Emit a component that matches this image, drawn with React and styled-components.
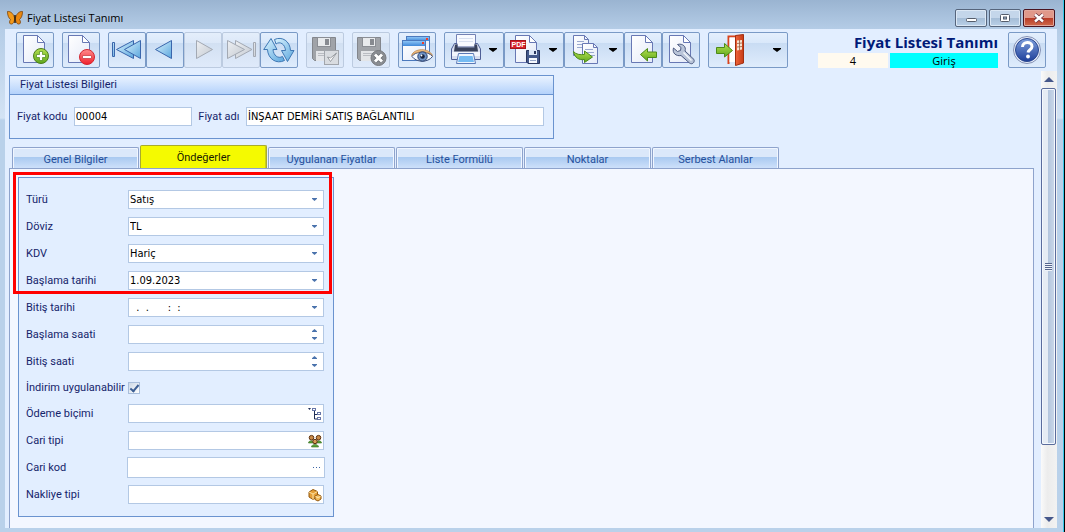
import React from 'react'
import styled, { createGlobalStyle, css } from "styled-components";

const GlobalStyle = createGlobalStyle`
  * {
    box-sizing: border-box;
  }
  body {
    margin: 0;
    background: #b9d1ea;
    font-family: Roboto, "Open Sans", sans-serif;
    font-size: 11px;
    color: #15246b;
  }
  button, input, select {
    font: inherit;
    color: inherit;
  }
`;

/* ---------- icons ---------- */

const Defs = () => (
  <HiddenSvg aria-hidden="true">
    <defs>
      <linearGradient id="blue" x1="0" y1="0" x2="1" y2="1">
        <stop offset="0" stopColor="#dcf4ff" />
        <stop offset="1" stopColor="#5aa6dd" />
      </linearGradient>
      <linearGradient id="gray" x1="0" y1="0" x2="1" y2="1">
        <stop offset="0" stopColor="#eef0f3" />
        <stop offset="1" stopColor="#c3c9d1" />
      </linearGradient>
      <linearGradient id="page" x1="0" y1="0" x2="1" y2="1">
        <stop offset="0" stopColor="#ffffff" />
        <stop offset="1" stopColor="#e4eaf8" />
      </linearGradient>
      <linearGradient id="green" x1="0" y1="0" x2="0" y2="1">
        <stop offset="0" stopColor="#b4e04f" />
        <stop offset="1" stopColor="#5fa81c" />
      </linearGradient>
      <linearGradient id="red" x1="0" y1="0" x2="0" y2="1">
        <stop offset="0" stopColor="#ff8d8d" />
        <stop offset="1" stopColor="#f0202c" />
      </linearGradient>
      <linearGradient id="win" x1="0" y1="0" x2="0" y2="1">
        <stop offset="0" stopColor="#8cc4f6" />
        <stop offset="1" stopColor="#3f87d8" />
      </linearGradient>
      <linearGradient id="help" x1="0" y1="0" x2="0" y2="1">
        <stop offset="0" stopColor="#7f9fdc" />
        <stop offset="1" stopColor="#1e3f9a" />
      </linearGradient>
      <linearGradient id="door" x1="0" y1="0" x2="1" y2="0">
        <stop offset="0" stopColor="#f0643a" />
        <stop offset="1" stopColor="#c63c17" />
      </linearGradient>
    </defs>
  </HiddenSvg>
);

const Icon = ({ children }) => (
  <svg width="32" height="32" viewBox="0 0 32 32" aria-hidden="true">{children}</svg>
);

const Page = ({ x = 0 }) => (
  <g transform={`translate(${x} 0)`}>
    <path d="M4.500 1.500H18.500L25.500 8.500V28.500H4.500Z" fill="url(#page)" stroke="#6878b4" />
    <path d="M18.500 1.500V8.500H25.500Z" fill="#fff" stroke="#6878b4" strokeLinejoin="round" />
  </g>
);

const NewIcon = () => (
  <Icon>
    <Page />
    <circle cx="22" cy="22" r="7.500" fill="url(#green)" stroke="#4c7d1c" />
    <path d="M20.500 17.500h3v3h3v3h-3v3h-3v-3h-3v-3h3z" fill="#fff" stroke="#4c8a18" strokeWidth="0.700" />
  </Icon>
);

const DeleteIcon = () => (
  <Icon>
    <Page x={-1} />
    <circle cx="22" cy="23" r="7.500" fill="url(#red)" stroke="#d42630" />
    <rect x="17.500" y="21.500" width="9" height="3" rx="0.500" fill="#fff" stroke="#b81c24" strokeWidth="0.600" />
  </Icon>
);

const FirstIcon = () => (
  <Icon>
    <g fill="url(#blue)" stroke="#3a66ac" strokeLinejoin="round">
      <rect x="1.500" y="8.500" width="2" height="14" />
      <path d="M22.500 6.500V24.500L5.500 15.500Z" />
      <path d="M29.500 6.500V24.500L13.500 15.500Z" />
    </g>
  </Icon>
);

const PrevIcon = () => (
  <Icon>
    <path d="M22.500 6.500V24.500L6.500 15.500Z" fill="url(#blue)" stroke="#3a66ac" strokeLinejoin="round" />
  </Icon>
);

const NextIcon = () => (
  <Icon>
    <path d="M9.500 6.500V24.500L25.500 15.500Z" fill="url(#gray)" stroke="#a3a9b3" strokeLinejoin="round" />
  </Icon>
);

const LastIcon = () => (
  <Icon>
    <g fill="url(#gray)" stroke="#a3a9b3" strokeLinejoin="round">
      <path d="M10.500 6.500V24.500L27 15.500Z" />
      <path d="M2.500 6.500V24.500L19.500 15.500Z" />
      <rect x="28.500" y="8.500" width="2" height="14" />
    </g>
  </Icon>
);

const RefreshIcon = () => (
  <Icon>
    <g fill="url(#blue)" stroke="#3f78b4" strokeLinejoin="round">
      <path d="M11.500 5.500C19 2 27 7 27.500 16.500H31L24.500 27.500L18.500 16.500H22.500C22 10 17 7 13 10Z" />
      <path d="M8 4.500L14 15.500H10C10.500 21.500 15 25 19.500 22.500L21.500 26.500C13.500 30.500 5 25 4.500 15.500H0.700Z" />
    </g>
  </Icon>
);

const GrayFloppy = ({ x = 0 }) => (
  <g transform={`translate(${x} 0)`}>
    <path d="M3.500 3.500H26.500V26.500H5.500L3.500 24.500Z" fill="#a0a3a8" stroke="#83868c" />
    <rect x="8" y="3" width="14" height="10" fill="#8b8e94" />
    <rect x="9" y="4" width="12" height="8" fill="#e8eaec" />
    <rect x="16" y="5" width="4" height="6" fill="#878a90" />
    <rect x="7" y="17" width="16" height="10" fill="#e3e5e8" />
    <path d="M9 19.500h12M9 21.500h12" stroke="#b9bcc2" />
  </g>
);

const SaveIcon = () => (
  <Icon>
    <GrayFloppy />
    <rect x="15.500" y="16.500" width="14" height="14" fill="#d9dce0" stroke="#a1a5ab" />
    <path d="M18.500 23l3 4.500l6-8.500l-6 5z" fill="#fff" stroke="#85898f" strokeWidth="0.800" />
  </Icon>
);

const SaveCancelIcon = () => (
  <Icon>
    <GrayFloppy x={-1} />
    <circle cx="23.500" cy="24" r="7.500" fill="#8a8d92" stroke="#76797e" />
    <path d="M20 20.500l7 7M27 20.500l-7 7" stroke="#6a6d72" strokeWidth="4.500" />
    <path d="M20 20.500l7 7M27 20.500l-7 7" stroke="#fff" strokeWidth="3" />
  </Icon>
);

const ViewIcon = () => (
  <Icon>
    <rect x="5.500" y="2.500" width="23" height="18" fill="#eef4fd" stroke="#4b79bd" />
    <rect x="6" y="3" width="22" height="4" fill="url(#win)" />
    <rect x="25" y="4" width="2" height="2" fill="#f03c28" />
    <rect x="1.500" y="6.500" width="23" height="20" fill="url(#page)" stroke="#4b79bd" />
    <rect x="2" y="7" width="22" height="5" fill="url(#win)" />
    <rect x="21" y="8" width="2" height="2" fill="#f03c28" />
    <path d="M11 22.500C14 17 27 16.500 31.500 22.500C27 29 15 28.500 11 22.500Z" fill="#f7fbff" stroke="#3a4f7e" />
    <path d="M10.500 21.500C13 14 28 13.500 31.500 21.500C27 16.500 15.500 16.500 10.500 21.500Z" fill="#f3c48a" stroke="#b57b3c" strokeWidth="0.700" />
    <circle cx="21.500" cy="22.500" r="4.700" fill="#6f93c6" stroke="#2b426f" />
    <circle cx="21.500" cy="22.500" r="2.300" fill="#17233f" />
    <circle cx="20.500" cy="21.500" r="0.900" fill="#fff" />
  </Icon>
);

const PrintIcon = () => (
  <Icon>
    <path d="M6.500 0.500H25.500V14H6.500Z" fill="#f8faff" stroke="#7482b4" />
    <path d="M9 4.500h14M9 7.500h14" stroke="#d8e0f0" />
    <path d="M4.500 9.500H7V13H25V9.500H27.500L30.500 15V25.500H1.500V15Z" fill="#d8dff0" stroke="#4f5f96" />
    <path d="M5 10.500H7.500V13.500H24.500V10.500H27L28 17.500H4Z" fill="#39425c" />
    <rect x="2" y="18" width="28" height="4" fill="#f3f6fd" />
    <path d="M8.500 19.500H23.500L25.500 29.500H6.500Z" fill="#eff6ff" stroke="#5b79b6" />
    <path d="M9.500 22H22.500L24 28H8Z" fill="#75bbf2" />
  </Icon>
);

const PdfIcon = () => (
  <Icon>
    <Page x={1} />
    <rect x="0.500" y="6.500" width="15" height="8" fill="#d8232b" stroke="#a3151c" />
    <text x="1.500" y="13" fontSize="7" fontWeight="bold" fontFamily="Liberation Sans, sans-serif" fill="#fff">PDF</text>
    <path d="M16.500 16.500H29.500V29.500H18L16.500 28Z" fill="#43588a" stroke="#28365f" />
    <rect x="19" y="16" width="8" height="5" fill="#dbe6f7" />
    <rect x="24" y="17" width="2" height="3" fill="#28365f" />
    <rect x="19" y="24" width="8" height="5" fill="#f6f9fe" />
    <path d="M20 26.500h6" stroke="#93a4c8" />
  </Icon>
);

const ExportIcon = () => (
  <Icon>
    <path d="M3.500 1.500H14.500L18.500 5.500V21.500H3.500Z" fill="url(#page)" stroke="#6878b4" />
    <path d="M14.500 1.500V5.500H18.500" fill="none" stroke="#6878b4" />
    <path d="M7 7.500h7M7 10.500h8M7 13.500h8" stroke="#9aa9cf" />
    <path d="M12.500 9.500H23.500L27.500 13.500V29.500H12.500Z" fill="url(#page)" stroke="#6878b4" />
    <path d="M23.500 9.500V13.500H27.500" fill="none" stroke="#6878b4" />
    <path d="M15 15.500h8M15 18.500h9M20 21.500h5" stroke="#9aa9cf" />
    <path d="M3.500 17.500C6 20.500 10 21 14.500 20.500V17L22.500 23L14.500 28.500V25.500C9 26.500 4.500 23.500 3.500 17.500Z" fill="url(#green)" stroke="#4c8a18" />
  </Icon>
);

const ImportIcon = () => (
  <Icon>
    <Page />
    <path d="M13.500 20.500L20.500 14.500V18H29.500V23.500H20.500V27Z" fill="url(#green)" stroke="#4c8a18" strokeLinejoin="round" />
  </Icon>
);

const WrenchIcon = () => (
  <Icon>
    <Page />
    <path d="M8.500 14L12.500 17.500L15.500 16.500L16 13.500L12.500 10.500C18 9 21.500 13 20 17L29 25.500C30 28.500 27 31 24.500 29L16 21.500C11 22.500 7 19 8.500 14Z" fill="#b9c4d8" stroke="#4c5a80" strokeLinejoin="round" />
    <path d="M18.500 18.500L26.500 26.500" stroke="#f4f7fc" strokeWidth="1.500" />
  </Icon>
);

const DoorIcon = () => (
  <Icon>
    <path d="M14.500 30V2.500H25" fill="none" stroke="#d9441c" strokeWidth="2" />
    <path d="M15.500 3.500H22V28H15.500Z" fill="#fff" />
    <path d="M21.500 1.500L29.500 0.500V29L21.500 31.500Z" fill="url(#door)" stroke="#a32f10" />
    <path d="M23 6.500L28 6V15.500L23 16.500Z" fill="#f7e3cf" />
    <path d="M25.500 6v10M23 9.500l5-0.500M23 13l5-0.500" stroke="#9b5a3c" strokeWidth="0.800" />
    <path d="M2.500 13.500H10.500V9.500L18.500 16.500L10.500 23V19.500H2.500Z" fill="url(#green)" stroke="#4c8a18" strokeLinejoin="round" />
  </Icon>
);

const HelpIcon = () => (
  <Icon>
    <circle cx="16" cy="16" r="13.500" fill="#e8eefb" stroke="#8491b4" />
    <circle cx="16" cy="16" r="11.500" fill="url(#help)" stroke="#2a478f" />
    <path d="M11.500 13C11.500 7 21 7 21 12.500C21 16 17.500 15.500 17 18.500" fill="none" stroke="#fff" strokeWidth="3" />
    <circle cx="17" cy="22.500" r="1.900" fill="#fff" />
  </Icon>
);

const Butterfly = () => (
  <svg width="16" height="16" viewBox="0 0 16 16" aria-hidden="true">
    <path d="M0.500 1.500C4 1 7 4.500 7.700 8.500C7.500 12 6 14.500 3.500 14C2 13 2.500 11 3.500 9.500C1.500 8 0.500 5 0.500 1.500Z" fill="#f39a1b" stroke="#7d4208" strokeWidth="0.800" />
    <path d="M15.500 1.500C12 1 9 4.500 8.300 8.500C8.500 12 10 14.500 12.500 14C14 13 13.500 11 12.500 9.500C14.500 8 15.500 5 15.500 1.500Z" fill="#e98712" stroke="#7d4208" strokeWidth="0.800" />
    <path d="M8 5v8" stroke="#33200a" strokeWidth="1.500" />
  </svg>
);

const Caret = ({ up, dark }) => (
  <svg width={dark ? 8 : 5} height={dark ? 4 : 3} viewBox="0 0 8 4" preserveAspectRatio="none" aria-hidden="true">
    <path d={up ? "M0 4H8V3L4 0L0 3Z" : "M0 0H8V1L4 4L0 1Z"} fill={dark ? "#000" : "#4a72ac"} />
  </svg>
);

const TreeIcon = () => (
  <svg width="14" height="14" viewBox="0 0 14 14" aria-hidden="true">
    <path d="M0 1h3l-1.500 2z" fill="#1d2c55" />
    <path d="M6.500 4v8H9M6.500 7.500H9" fill="none" stroke="#1d2c55" />
    <rect x="4.500" y="1.500" width="3" height="2" fill="#fff" stroke="#6675a8" />
    <rect x="9.500" y="5.500" width="3" height="2" fill="#fff" stroke="#6675a8" />
    <rect x="9.500" y="10.500" width="3" height="2" fill="#fff" stroke="#6675a8" />
  </svg>
);

const PeopleIcon = () => (
  <svg width="14" height="14" viewBox="0 0 14 14" aria-hidden="true">
    <path d="M0.500 9C0.500 6 6 6 6 9ZM8 9C8 6 13.500 6 13.500 9Z" fill="#5ba33a" stroke="#31691c" strokeWidth="0.600" />
    <circle cx="3.500" cy="3.700" r="2.300" fill="#c98a48" stroke="#5d3210" />
    <circle cx="10.500" cy="3.700" r="2.300" fill="#c98a48" stroke="#5d3210" />
    <path d="M3.500 13C3.500 9.500 10.500 9.500 10.500 13Z" fill="#5ba33a" stroke="#31691c" strokeWidth="0.600" />
    <circle cx="7" cy="7.500" r="2.200" fill="#d89a58" stroke="#5d3210" />
  </svg>
);

const BoxesIcon = () => (
  <svg width="14" height="14" viewBox="0 0 14 14" aria-hidden="true">
    <path d="M1 4L5 1.500L9.500 3.500V9L5 11.500L1 9Z" fill="#e5a038" stroke="#94590f" />
    <path d="M1 4L5 6L9.500 3.500M5 6V11.500" fill="none" stroke="#fbe2a4" />
    <path d="M7 8L10 6.500L13 8V11L10 13L7 11.500Z" fill="#f2bc5c" stroke="#94590f" />
    <path d="M7.500 8.500L10 9.500L12.500 8.500" fill="none" stroke="#fde9b8" />
  </svg>
);

const DotsIcon = () => (
  <svg width="14" height="14" viewBox="0 0 14 14" aria-hidden="true">
    <path d="M4 6h1v1h-1zM7 6h1v1h-1zM10 6h1v1h-1z" fill="#3d66a6" />
  </svg>
);

/* ---------- data ---------- */

const toolbar = [
  [{ label: "Yeni", icon: <NewIcon /> }],
  [{ label: "Sil", icon: <DeleteIcon /> }],
  [
    { label: "İlk", icon: <FirstIcon /> },
    { label: "Önceki", icon: <PrevIcon /> },
    { label: "Sonraki", icon: <NextIcon />, disabled: true },
    { label: "Son", icon: <LastIcon />, disabled: true },
    { label: "Yenile", icon: <RefreshIcon /> },
  ],
  [{ label: "Kaydet", icon: <SaveIcon />, disabled: true }],
  [{ label: "Vazgeç", icon: <SaveCancelIcon />, disabled: true }],
  [{ label: "Göster", icon: <ViewIcon /> }],
  [
    { label: "Yazdır", icon: <PrintIcon />, menu: true },
    { label: "PDF kaydet", icon: <PdfIcon />, menu: true },
    { label: "Kopyala", icon: <ExportIcon />, menu: true },
    { label: "Aktar", icon: <ImportIcon /> },
    { label: "Ayarlar", icon: <WrenchIcon /> },
  ],
  [{ label: "Çıkış", icon: <DoorIcon />, menu: true, wide: true }],
];

const tabs = ["Genel Bilgiler", "Öndeğerler", "Uygulanan Fiyatlar", "Liste Formülü", "Noktalar", "Serbest Alanlar"];

const fields = [
  { id: "turu", label: "Türü", type: "select", value: "Satış" },
  { id: "doviz", label: "Döviz", type: "select", value: "TL" },
  { id: "kdv", label: "KDV", type: "select", value: "Hariç" },
  { id: "baslamaTarihi", label: "Başlama tarihi", type: "date", value: "1.09.2023" },
  { id: "bitisTarihi", label: "Bitiş tarihi", type: "date", value: "  .  .      :  :" },
  { id: "baslamaSaati", label: "Başlama saati", type: "spin" },
  { id: "bitisSaati", label: "Bitiş saati", type: "spin" },
  { id: "indirim", label: "İndirim uygulanabilir", type: "check" },
  { id: "odeme", label: "Ödeme biçimi", type: "lookup", icon: <TreeIcon /> },
  { id: "cariTipi", label: "Cari tipi", type: "lookup", icon: <PeopleIcon /> },
  { id: "cariKod", label: "Cari kod", type: "lookup", icon: <DotsIcon />, large: true },
  { id: "nakliye", label: "Nakliye tipi", type: "lookup", icon: <BoxesIcon /> },
];

/* ---------- components ---------- */

const FieldControl = ({ field }) => {
  const { id, label, type, value = "", icon, large } = field;

  if (type === "check") {
    return <CheckBox id={id} type="checkbox" defaultChecked />;
  }
  if (type === "select") {
    return (
      <FieldBox>
        <Select id={id} defaultValue={value}>
          <option>{value}</option>
        </Select>
        <SelectCaret><Caret /></SelectCaret>
      </FieldBox>
    );
  }
  return (
    <FieldBox $large={large}>
      <TextInput id={id} type="text" defaultValue={value} />
      {type === "date" && <FieldButton type="button" aria-label={`${label} seç`}><Caret /></FieldButton>}
      {type === "spin" && (
        <Spinner>
          <SpinButton type="button" aria-label={`${label} artır`}><Caret up /></SpinButton>
          <SpinButton type="button" aria-label={`${label} azalt`}><Caret /></SpinButton>
        </Spinner>
      )}
      {type === "lookup" && <FieldButton type="button" aria-label={`${label} ara`}>{icon}</FieldButton>}
    </FieldBox>
  );
};

const TitleBar = () => (
  <Title>
    <Butterfly />
    <TitleText>Fiyat Listesi Tanımı</TitleText>
    <WindowButtons>
      <WindowButton aria-label="Küçült">
        <svg width="12" height="12" viewBox="0 0 12 12"><rect x="1.500" y="6.500" width="10" height="3" rx="1" fill="#fff" stroke="#555d6b" /></svg>
      </WindowButton>
      <WindowButton aria-label="Büyüt">
        <svg width="12" height="12" viewBox="0 0 12 12"><rect x="1.500" y="2.500" width="9" height="7" rx="1" fill="#fff" stroke="#555d6b" /><rect x="4.500" y="5" width="3" height="2" fill="#9fb6d0" stroke="#555d6b" /></svg>
      </WindowButton>
      <WindowButton $close aria-label="Kapat">
        <svg width="12" height="12" viewBox="0 0 12 12"><path d="M2 2.500l8 7M10 2.500l-8 7" stroke="#6b3440" strokeWidth="4" /><path d="M2 2.500l8 7M10 2.500l-8 7" stroke="#fff" strokeWidth="2.400" /></svg>
      </WindowButton>
    </WindowButtons>
  </Title>
);

export default function App() {
  return (
    <Window>
      <GlobalStyle />
      <Defs />
      <TitleBar />
      <Client>
        <Toolbar>
          {toolbar.map((group, i) => (
            <ButtonGroup key={i}>
              {group.map(({ label, icon, disabled, menu, wide }) => (
                <ToolButton key={label} aria-label={label} disabled={disabled} $menu={menu} $wide={wide}>
                  {icon}
                  {menu && <Caret dark />}
                </ToolButton>
              ))}
            </ButtonGroup>
          ))}
          <Status>
            <Heading>Fiyat Listesi Tanımı</Heading>
            <StatusRow>
              <Count>4</Count>
              <Mode>Giriş</Mode>
            </StatusRow>
          </Status>
          <ToolButton aria-label="Yardım"><HelpIcon /></ToolButton>
        </Toolbar>

        <Body>
          <Content>
            <InfoBox>
              <InfoTitle>Fiyat Listesi Bilgileri</InfoTitle>
              <InfoRow>
                <label htmlFor="kod">Fiyat kodu</label>
                <InfoInput id="kod" defaultValue="00004" />
                <label htmlFor="ad">Fiyat adı</label>
                <InfoInput id="ad" $wide defaultValue="İNŞAAT DEMİRİ SATIŞ BAĞLANTILI" />
              </InfoRow>
            </InfoBox>

            <TabBar role="tablist">
              {tabs.map((tab) => (
                <Tab key={tab} role="tab" aria-selected={tab === "Öndeğerler"} $active={tab === "Öndeğerler"}>{tab}</Tab>
              ))}
            </TabBar>
            <TabPage role="tabpanel">
              <Form>
                {fields.map((field) => (
                  <Row key={field.id} $short={field.type === "check"}>
                    <FieldLabel htmlFor={field.id}>{field.label}</FieldLabel>
                    <FieldControl field={field} />
                  </Row>
                ))}
                <Highlight />
              </Form>
            </TabPage>
          </Content>

          <ScrollBar>
            <ScrollButton aria-label="Yukarı"><ScrollArrow $up /></ScrollButton>
            <Thumb><Grip /></Thumb>
            <ScrollSpace />
            <ScrollButton aria-label="Aşağı"><ScrollArrow /></ScrollButton>
          </ScrollBar>
        </Body>
      </Client>
    </Window>
  );
}

/* ---------- styles ---------- */

const HiddenSvg = styled.svg`
  position: absolute;
  width: 0;
  height: 0;
`;
const Window = styled.div`
  display: flex;
  flex-direction: column;
  min-height: 100vh;
  padding: 0 7px 4px 5px;
  border-right: 1px solid #000;
  box-shadow: inset -1px 0 #35c8e8;
  background: linear-gradient(#9ab4d1, #b5cde7 30px, #d3e3f4 118px, #b9d1ea 120px);
`;
const Title = styled.header`
  display: flex;
  align-items: center;
  height: 29px;
  padding: 6px 2px 0;
`;
const TitleText = styled.span`
  flex: 1;
  margin-left: 4px;
  font-family: "Open Sans", sans-serif;
  font-size: 11px;
  color: #000;
`;
const WindowButtons = styled.div`
  display: flex;
  gap: 2px;
`;
const WindowButton = styled.button`
  display: flex;
  align-items: center;
  justify-content: center;
  width: 32px;
  height: 18px;
  padding: 0;
  border: 1px solid #56657c;
  border-radius: 2px;
  box-shadow: inset 0 0 0 1px #dce8f5;
  background: linear-gradient(#c4d6ea 50%, #a4bcd6 50%, #bad0e8);
  ${({ $close }) => $close && css`
    border-color: #4a1420;
    box-shadow: inset 0 0 0 1px #e3a79c;
    background: linear-gradient(#e0988a 50%, #b83a26 50%, #cf6a4c);
  `}
`;
const Client = styled.div`
  display: flex;
  flex-direction: column;
  flex: 1;
  background: #e2eeff;
`;
const Toolbar = styled.div`
  display: flex;
  gap: 8px;
  height: 42px;
  padding: 3px 11px;
`;
const ButtonGroup = styled.div`
  display: flex;
`;
const ToolButton = styled.button`
  display: flex;
  align-items: center;
  justify-content: center;
  flex: none;
  width: 38px;
  height: 36px;
  padding: 0;
  border: 1px solid #7a9ac6;
  border-radius: 2px;
  background: linear-gradient(#e4effd, #d9e8fa 30%, #c9dcf3 30%, #dfecfc);
  ${({ $menu, $wide }) => $menu && css`
    justify-content: space-between;
    width: ${$wide ? "80px" : "60px"};
    padding: 0 6px 0 5px;
  `}
  &:disabled {
    border-color: #bccbe0;
    background: linear-gradient(#e4eefb, #dce8f8 30%, #d2e0f2 30%, #dfeafa);
  }
`;
const Status = styled.div`
  display: flex;
  flex-direction: column;
  flex: 1;
  align-items: flex-end;
  margin-right: 2px;
`;
const Heading = styled.h1`
  margin: 0;
  font-family: "Open Sans", sans-serif;
  font-size: 15px;
  font-weight: bold;
  line-height: 21px;
  white-space: nowrap;
  color: #001a78;
`;
const StatusRow = styled.div`
  display: flex;
  gap: 2px;
  font-family: "Open Sans", sans-serif;
  line-height: 15px;
  text-align: center;
  color: #000;
`;
const Count = styled.span`
  width: 70px;
  background: #fffaef;
`;
const Mode = styled.span`
  width: 108px;
  background: #00ffff;
`;
const Body = styled.div`
  display: flex;
  flex: 1;
  gap: 7px;
`;
const Content = styled.main`
  display: flex;
  flex-direction: column;
  flex: 1;
  padding: 4px 0 0 4px;
`;
const InfoBox = styled.section`
  width: 545px;
  height: 64px;
  border: 1px solid #6a93cf;
`;
const InfoTitle = styled.h2`
  margin: 0;
  padding-left: 10px;
  height: 19px;
  border-bottom: 1px solid #6a93cf;
  font-size: 11px;
  font-weight: normal;
  line-height: 18px;
  background: linear-gradient(#eaf3ff, #b4d2fb);
`;
const InfoRow = styled.div`
  display: flex;
  align-items: center;
  justify-content: space-between;
  padding: 12px 9px 0 7px;
`;
const inputBase = css`
  height: 19px;
  border: 1px solid #b3c8e4;
  background: #fff;
  font-family: "DejaVu Sans Condensed", "DejaVu Sans", sans-serif;
  color: #000;
`;
const InfoInput = styled.input`
  ${inputBase}
  width: ${({ $wide }) => ($wide ? "298px" : "118px")};
  padding: 0 1px;
`;
const TabBar = styled.div`
  display: flex;
  align-items: flex-end;
  gap: 1px;
  margin-top: 6px;
  padding-left: 3px;
`;
const Tab = styled.button`
  width: 127px;
  height: 21px;
  padding: 2px 0 0;
  border: 1px solid #8ea3cc;
  border-bottom: 0;
  border-radius: 2px 2px 0 0;
  box-shadow: inset 1px 1px #f0f6ff, inset -1px 0 #f0f6ff;
  background: linear-gradient(#dbe8fa 45%, #a9c9f0 45%, #cde0fa);
  color: #26509c;
  ${({ $active }) => $active && css`
    height: 23px;
    padding: 0;
    border-color: #a8ab2c;
    box-shadow: inset -1px 0 #c9cd20;
    background: #f5fa00;
    color: #1a1a00;
  `}
`;
const TabPage = styled.section`
  flex: 1;
  padding: 8px 8px 11px;
  border: 1px solid #8ea3cc;
  border-bottom: 0;
  background: #f3f7ff;
`;
const Form = styled.form`
  position: relative;
  width: 316px;
  padding: 8px 7px;
  border: 1px solid #6a93cf;
  background: #e2eeff;
`;
/* red frame over the first four rows */
const Highlight = styled.div`
  position: absolute;
  top: -6px;
  left: -6px;
  width: 319px;
  height: 122px;
  border: 3px solid #ff0000;
  pointer-events: none;
`;
const Row = styled.div`
  display: flex;
  align-items: center;
  height: ${({ $short }) => ($short ? "25px" : "27px")};
`;
const FieldLabel = styled.label`
  width: 102px;
  white-space: nowrap;
`;
const FieldBox = styled.div`
  ${inputBase}
  position: relative;
  display: flex;
  align-items: center;
  width: 196px;
  ${({ $large }) => $large && css`
    width: 198px;
    height: 21px;
    margin: 0 -1px;
  `}
`;
const TextInput = styled.input`
  flex: 1;
  min-width: 0;
  height: 100%;
  padding: 0 1px;
  border: 0;
  background: none;
  outline: none;
`;
const Select = styled.select`
  appearance: none;
  width: 100%;
  height: 100%;
  padding: 0 1px;
  border: 0;
  background: none;
  outline: none;
`;
const SelectCaret = styled.span`
  position: absolute;
  right: 0;
  display: flex;
  justify-content: center;
  width: 17px;
  pointer-events: none;
`;
const FieldButton = styled.button`
  display: flex;
  align-items: center;
  justify-content: center;
  width: 17px;
  height: 100%;
  padding: 0;
  border: 0;
  background: none;
`;
const Spinner = styled.div`
  display: flex;
  flex-direction: column;
`;
const SpinButton = styled(FieldButton)`
  height: 8px;
`;
const CheckBox = styled.input`
  appearance: none;
  display: flex;
  align-items: center;
  justify-content: center;
  width: 12px;
  height: 12px;
  margin: 0;
  border: 1px solid #a9bedb;
  background: linear-gradient(135deg, #ccd8e6, #ffffff);
  &:checked::after {
    content: "";
    width: 3px;
    height: 7px;
    border: solid #3d5f94;
    border-width: 0 2px 2px 0;
    transform: rotate(40deg);
  }
`;
const ScrollBar = styled.div`
  display: flex;
  flex-direction: column;
  width: 16px;
  background: linear-gradient(90deg, #fafafa, #ececec 40%, #f2f2f2);
`;
const ScrollButton = styled.button`
  display: flex;
  align-items: center;
  justify-content: center;
  height: 17px;
  padding: 0;
  border: 0;
  background: none;
`;
const ScrollArrow = styled.span`
  border: 5px solid transparent;
  ${({ $up }) => $up
    ? css`border-top: 0; border-bottom-color: #45578a;`
    : css`border-bottom: 0; border-top-color: #45578a;`}
`;
const Thumb = styled.div`
  display: flex;
  align-items: center;
  justify-content: center;
  flex: 357;
  margin-right: 1px;
  border: 1px solid #5a6c9c;
  border-radius: 2px;
  box-shadow: inset 0 0 0 1px #f4f8fd;
  background: linear-gradient(90deg, #e6ecf4 45%, #b4c6de 50%, #ccd9ea);
`;
const ScrollSpace = styled.div`
  flex: 66;
`;
const Grip = styled.span`
  width: 7px;
  height: 8px;
  background: repeating-linear-gradient(#56658c 0 1px, #f0f4fa 1px 2px);
`;
